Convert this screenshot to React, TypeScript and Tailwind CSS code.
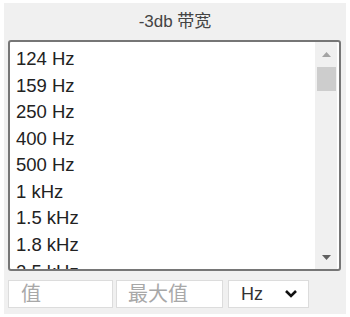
import React from 'react';

const items = ['124 Hz', '159 Hz', '250 Hz', '400 Hz', '500 Hz', '1 kHz', '1.5 kHz', '1.8 kHz', '2.5 kHz', '3 kHz'];

const font = { fontFamily: '"Liberation Sans", Arial, "Noto Sans CJK SC", sans-serif' };

const App: React.FC = () => {
  return (
    <div className="w-[350px] h-[317px] bg-white overflow-hidden" style={font}>
      <div className="ml-[4px] mt-[3px] w-[342px] h-[311px] bg-[#f0f0f0]">
        {/* Title */}
        <div className="h-[37px] flex items-center justify-center text-[17px] text-[#444]">
          -3db 带宽
        </div>

        {/* List box */}
        <div className="ml-[4px] w-[333px] h-[231px] border-2 border-[#767676] rounded-[3px] bg-white flex overflow-hidden">
          <div className="flex-1 pl-[6px] pt-[3.5px] overflow-hidden">
            {items.map(item => (
              <div key={item} className="h-[26.6px] flex items-center text-[18.5px] text-[#222]">
                {item}
              </div>
            ))}
          </div>
          <div className="w-[22px] mr-[2px] bg-[#f0f0f0] flex flex-col items-center">
            <div className="h-[25px] flex items-center justify-center">
              <svg width="9" height="5" viewBox="0 0 9 5">
                <path d="M0 5 L4.5 0 L9 5 Z" fill="#a3a3a3" />
              </svg>
            </div>
            <div className="w-[19px] h-[24px] bg-[#cdcdcd]" />
            <div className="flex-1" />
            <div className="h-[24px] flex items-center justify-center">
              <svg width="9" height="5" viewBox="0 0 9 5">
                <path d="M0 0 L4.5 5 L9 0 Z" fill="#606060" />
              </svg>
            </div>
          </div>
        </div>

        {/* Inputs */}
        <div className="ml-[4px] mt-[9px] flex gap-[3px]">
          <div className="w-[105px] h-[28px] bg-white border border-[#dcdcdc] flex items-center pl-[12px] text-[20px] leading-none text-[#a8a8a8]">
            值
          </div>
          <div className="w-[107px] h-[28px] bg-white border border-[#dcdcdc] flex items-center pl-[11px] text-[20px] leading-none text-[#a8a8a8]">
            最大值
          </div>
          <div className="ml-[2px] w-[81px] h-[28px] bg-white border border-[#dcdcdc] flex items-center pl-[12px] pr-[10px] justify-between text-[18px] text-[#333]">
            <span>Hz</span>
            <svg width="14" height="10" viewBox="0 0 14 10">
              <path d="M2 2 L7 7 L12 2" stroke="#111" strokeWidth="2.6" fill="none" />
            </svg>
          </div>
        </div>
      </div>
    </div>
  );
};

export default App;
